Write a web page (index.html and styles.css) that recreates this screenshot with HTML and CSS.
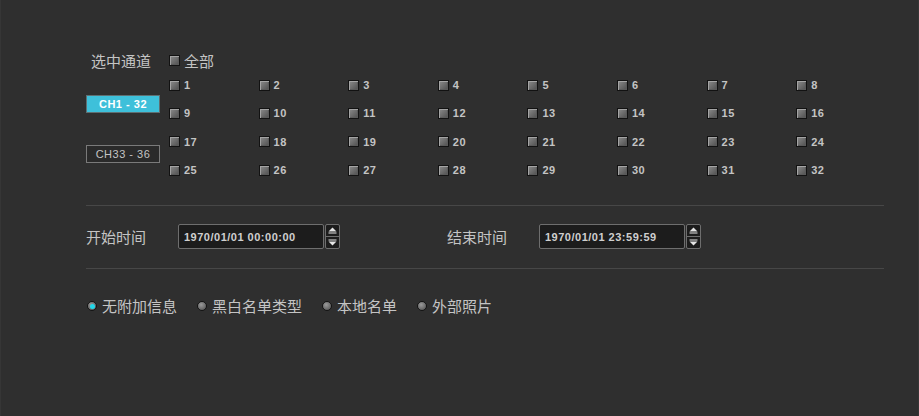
FILE: index.html
```html
<!DOCTYPE html>
<html lang="zh-CN">
<head>
    <meta charset="UTF-8">
    <meta name="viewport" content="width=device-width, initial-scale=1.0">
    <title>通道检索</title>
    <link rel="stylesheet" href="styles.css">
</head>
<body>

    <div class="panel">
        <div class="channel-head">
            <span class="section-label">选中通道</span>
            <label class="check check-all"><span class="box"></span>全部</label>
        </div>

        <div class="channel-body">
            <div class="ch-tabs">
                <button class="ch-tab active">CH1 - 32</button>
                <button class="ch-tab">CH33 - 36</button>
            </div>
            <div class="ch-grid" id="chGrid"></div>
        </div>

        <div class="divider"></div>

        <div class="time-row">
            <div class="time-group">
                <span class="time-label">开始时间</span>
                <div class="time-input">1970/01/01 00:00:00</div>
                <div class="spin">
                    <span class="spin-btn">
                        <svg width="11" height="7" viewBox="0 0 11 7"><path d="M5.5 0.5 L9.5 4.5 L1.5 4.5 Z" fill="#e6e6e6"/><rect x="1.5" y="5.5" width="8" height="1" fill="#e6e6e6"/></svg>
                    </span>
                    <span class="spin-btn">
                        <svg width="11" height="7" viewBox="0 0 11 7"><rect x="1.5" y="0.5" width="8" height="1" fill="#e6e6e6"/><path d="M1.5 2.5 L9.5 2.5 L5.5 6.5 Z" fill="#e6e6e6"/></svg>
                    </span>
                </div>
            </div>
            <div class="time-group">
                <span class="time-label">结束时间</span>
                <div class="time-input">1970/01/01 23:59:59</div>
                <div class="spin">
                    <span class="spin-btn">
                        <svg width="11" height="7" viewBox="0 0 11 7"><path d="M5.5 0.5 L9.5 4.5 L1.5 4.5 Z" fill="#e6e6e6"/><rect x="1.5" y="5.5" width="8" height="1" fill="#e6e6e6"/></svg>
                    </span>
                    <span class="spin-btn">
                        <svg width="11" height="7" viewBox="0 0 11 7"><rect x="1.5" y="0.5" width="8" height="1" fill="#e6e6e6"/><path d="M1.5 2.5 L9.5 2.5 L5.5 6.5 Z" fill="#e6e6e6"/></svg>
                    </span>
                </div>
            </div>
        </div>

        <div class="divider divider-2"></div>

        <div class="radio-row">
            <label class="radio"><span class="dot on"></span>无附加信息</label>
            <label class="radio"><span class="dot"></span>黑白名单类型</label>
            <label class="radio"><span class="dot"></span>本地名单</label>
            <label class="radio"><span class="dot"></span>外部照片</label>
        </div>
    </div>

    <script>
        // 通道 1 - 32
        const grid = document.getElementById('chGrid');
        for (let i = 1; i <= 32; i++) {
            const item = document.createElement('label');
            item.className = 'check ch-item';
            item.innerHTML = '<span class="box"></span><span class="ch-num">' + i + '</span>';
            grid.appendChild(item);
        }
    </script>

</body>
</html>
```

FILE: styles.css
```css
body {
    margin: 0;
    height: 416px;
    background-color: #2f2f2f;
    color: #c4c4c4;
    font-family: "Noto Sans CJK SC", "Noto Sans", sans-serif;
    border-left: 1px solid #363636;
    border-right: 1px solid #363636;
    box-sizing: border-box;
}
.panel {
    padding: 50px 0 0 85px;
}
.channel-head {
    display: flex;
    align-items: center;
    height: 21px;
}
.section-label {
    width: 83px;
    padding-left: 5px;
    box-sizing: border-box;
    font-size: 15px;
    line-height: 20px;
}
.check {
    display: flex;
    align-items: center;
    gap: 4px;
}
.check-all {
    font-size: 15px;
    line-height: 20px;
}
/* квадратик чекбокса */
.box {
    width: 11px;
    height: 11px;
    box-sizing: border-box;
    border: 1px solid #121212;
    background: linear-gradient(135deg, #8c8c8c, #4e4e4e);
    box-shadow: inset 1px 1px 0 #a4a4a4, inset -1px -1px 0 #5a5a5a;
    flex-shrink: 0;
}
.channel-body {
    display: flex;
}
.ch-tabs {
    width: 83px;
    display: flex;
    flex-direction: column;
    gap: 32px;
    padding-top: 24px;
}
.ch-tab {
    width: 74px;
    height: 18px;
    padding: 0;
    border: 1px solid #7a7a7a;
    background-color: #2a2a2a;
    color: #c4c4c4;
    font-family: "Liberation Sans", Arial, sans-serif;
    font-size: 11px;
    letter-spacing: 0.5px;
    cursor: pointer;
}
.ch-tab.active {
    background-color: #3ec0da;
    border-color: #5f6f72;
    color: #ffffff;
    font-weight: bold;
}
.ch-grid {
    display: grid;
    grid-template-columns: repeat(8, 89.6px);
    grid-auto-rows: 28.33px;
}
.ch-num {
    font-family: "Liberation Sans", Arial, sans-serif;
    font-weight: bold;
    font-size: 11px;
    letter-spacing: 0.5px;
    color: #c4c4c4;
}
.divider {
    width: 798px;
    height: 1px;
    margin-top: 21px;
    background-color: #474747;
}
.divider-2 {
    margin-top: 19px;
}
.time-row {
    display: flex;
    align-items: center;
    height: 25px;
    margin-top: 18px;
}
.time-group {
    display: flex;
    align-items: center;
    width: 361px;
}
.time-label {
    width: 92px;
    font-size: 15px;
    line-height: 20px;
}
.time-input {
    width: 146px;
    height: 25px;
    box-sizing: border-box;
    border: 1px solid #6e6e6e;
    border-radius: 2px;
    background-color: #1c1c1c;
    padding-left: 5px;
    display: flex;
    align-items: center;
    font-family: "Liberation Sans", Arial, sans-serif;
    font-weight: bold;
    font-size: 11px;
    letter-spacing: 0.5px;
    color: #cfcfcf;
}
.spin {
    width: 15px;
    height: 25px;
    margin-left: 1px;
    box-sizing: border-box;
    border: 1px solid #6e6e6e;
    border-radius: 2px;
    background-color: #1c1c1c;
    display: flex;
    flex-direction: column;
}
.spin-btn {
    flex: 1;
    display: flex;
    align-items: center;
    justify-content: center;
}
.spin-btn + .spin-btn {
    border-top: 1px solid #6e6e6e;
}
.radio-row {
    display: flex;
    gap: 20px;
    margin-top: 27px;
    padding-left: 1px;
}
.radio {
    display: flex;
    align-items: center;
    gap: 5px;
    font-size: 15px;
    line-height: 20px;
}
.dot {
    width: 10px;
    height: 10px;
    box-sizing: border-box;
    border-radius: 50%;
    border: 1px solid #141414;
    background: radial-gradient(circle at 40% 35%, #9a9a9a, #4c4c4c);
    display: flex;
    align-items: center;
    justify-content: center;
}
.dot.on::after {
    content: "";
    width: 5px;
    height: 5px;
    border-radius: 50%;
    background-color: #22d6e8;
}
```
